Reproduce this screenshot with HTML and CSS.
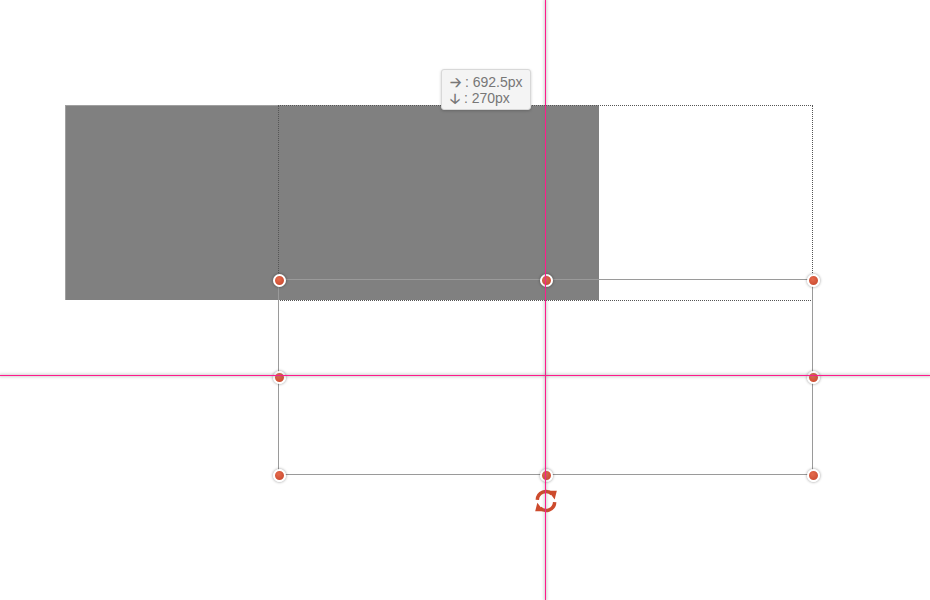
FILE: index.html
```html
<!DOCTYPE html>
<html lang="en">
<head>
  <meta charset="UTF-8">
  <title>Canvas</title>
  <link rel="stylesheet" href="styles.css">
</head>
<body>
  <div class="canvas">
    <div class="shape"></div>
    <div class="ghost"></div>

    <div class="selection">
      <span class="handle h-nw"></span>
      <span class="handle h-n"></span>
      <span class="handle h-ne"></span>
      <span class="handle h-w"></span>
      <span class="handle h-e"></span>
      <span class="handle h-sw"></span>
      <span class="handle h-s"></span>
      <span class="handle h-se"></span>
      <svg class="rotate" width="26" height="26" viewBox="0 0 24 24">
        <path d="M4 11 A8 8 0 0 1 17.5 5.5" fill="none" stroke="#cd4b2d" stroke-width="3.2"/>
        <path d="M14 2.5 L22 2.5 L20 10.5 Z" fill="#cd4b2d"/>
        <path d="M20 13 A8 8 0 0 1 6.5 18.5" fill="none" stroke="#cd4b2d" stroke-width="3.2"/>
        <path d="M10 21.5 L2 21.5 L4 13.5 Z" fill="#cd4b2d"/>
      </svg>
    </div>

    <div class="guide guide-v"></div>
    <div class="guide guide-h"></div>

    <div class="tip">
      <div><span class="arrow">&#129122;</span> : 692.5px</div>
      <div><span class="arrow">&#129123;</span> : 270px</div>
    </div>
  </div>
</body>
</html>
```

FILE: styles.css
```css
body {
  margin: 0;
  background: #fff;
  font-family: "Liberation Sans", Arial, sans-serif;
  overflow: hidden;
}
.canvas {
  position: relative;
  width: 930px;
  height: 600px;
  background: #fff;
}
.shape {
  position: absolute;
  left: 65px;
  top: 105px;
  width: 534px;
  height: 195px;
  background: #808080;
  box-sizing: border-box;
  border-top: 1px solid #a0a0a0;
  border-left: 1px solid #a0a0a0;
}
.ghost {
  position: absolute;
  left: 278px;
  top: 105px;
  width: 535px;
  height: 196px;
  box-sizing: border-box;
  border: 1px dotted #555;
}
.selection {
  position: absolute;
  left: 278px;
  top: 279px;
  width: 535px;
  height: 196px;
  box-sizing: border-box;
  border: 1px solid #9a9a9a;
}
.handle {
  position: absolute;
  width: 9px;
  height: 9px;
  margin: -6px 0 0 -6px;
  border-radius: 50%;
  border: 2px solid #fff;
  background: radial-gradient(circle at 40% 35%, #e56a4c, #c4452b);
  box-shadow: 0 0 3px rgba(0,0,0,0.45);
}
.h-nw { left: 0; top: 0; }
.h-n { left: 267px; top: 0; }
.h-ne { left: 534px; top: 0; }
.h-w { left: 0; top: 97px; }
.h-e { left: 534px; top: 97px; }
.h-sw { left: 0; top: 195px; }
.h-s { left: 267px; top: 195px; }
.h-se { left: 534px; top: 195px; }
.rotate {
  position: absolute;
  left: 254px;
  top: 208px;
}
.guide {
  position: absolute;
  background: #ff1a8c;
}
.guide-v {
  left: 545px;
  top: 0;
  width: 1px;
  height: 600px;
  box-shadow: 0 0 3px 1px rgba(120,120,120,0.35);
}
.guide-h {
  left: 0;
  top: 375px;
  width: 930px;
  height: 1px;
  box-shadow: 0 0 3px 1px rgba(120,120,120,0.35);
}
.tip {
  position: absolute;
  left: 441px;
  top: 69px;
  width: 90px;
  height: 41px;
  box-sizing: border-box;
  padding: 4px 0 0 8px;
  background: #f4f4f4;
  border: 1px solid #d8d8d8;
  border-radius: 3px;
  box-shadow: 0 1px 3px rgba(0,0,0,0.2);
  color: #777;
  font-size: 14px;
  line-height: 16px;
}
.arrow {
  font-family: "DejaVu Sans", sans-serif;
  font-size: 14px;
  font-weight: bold;
}
```
